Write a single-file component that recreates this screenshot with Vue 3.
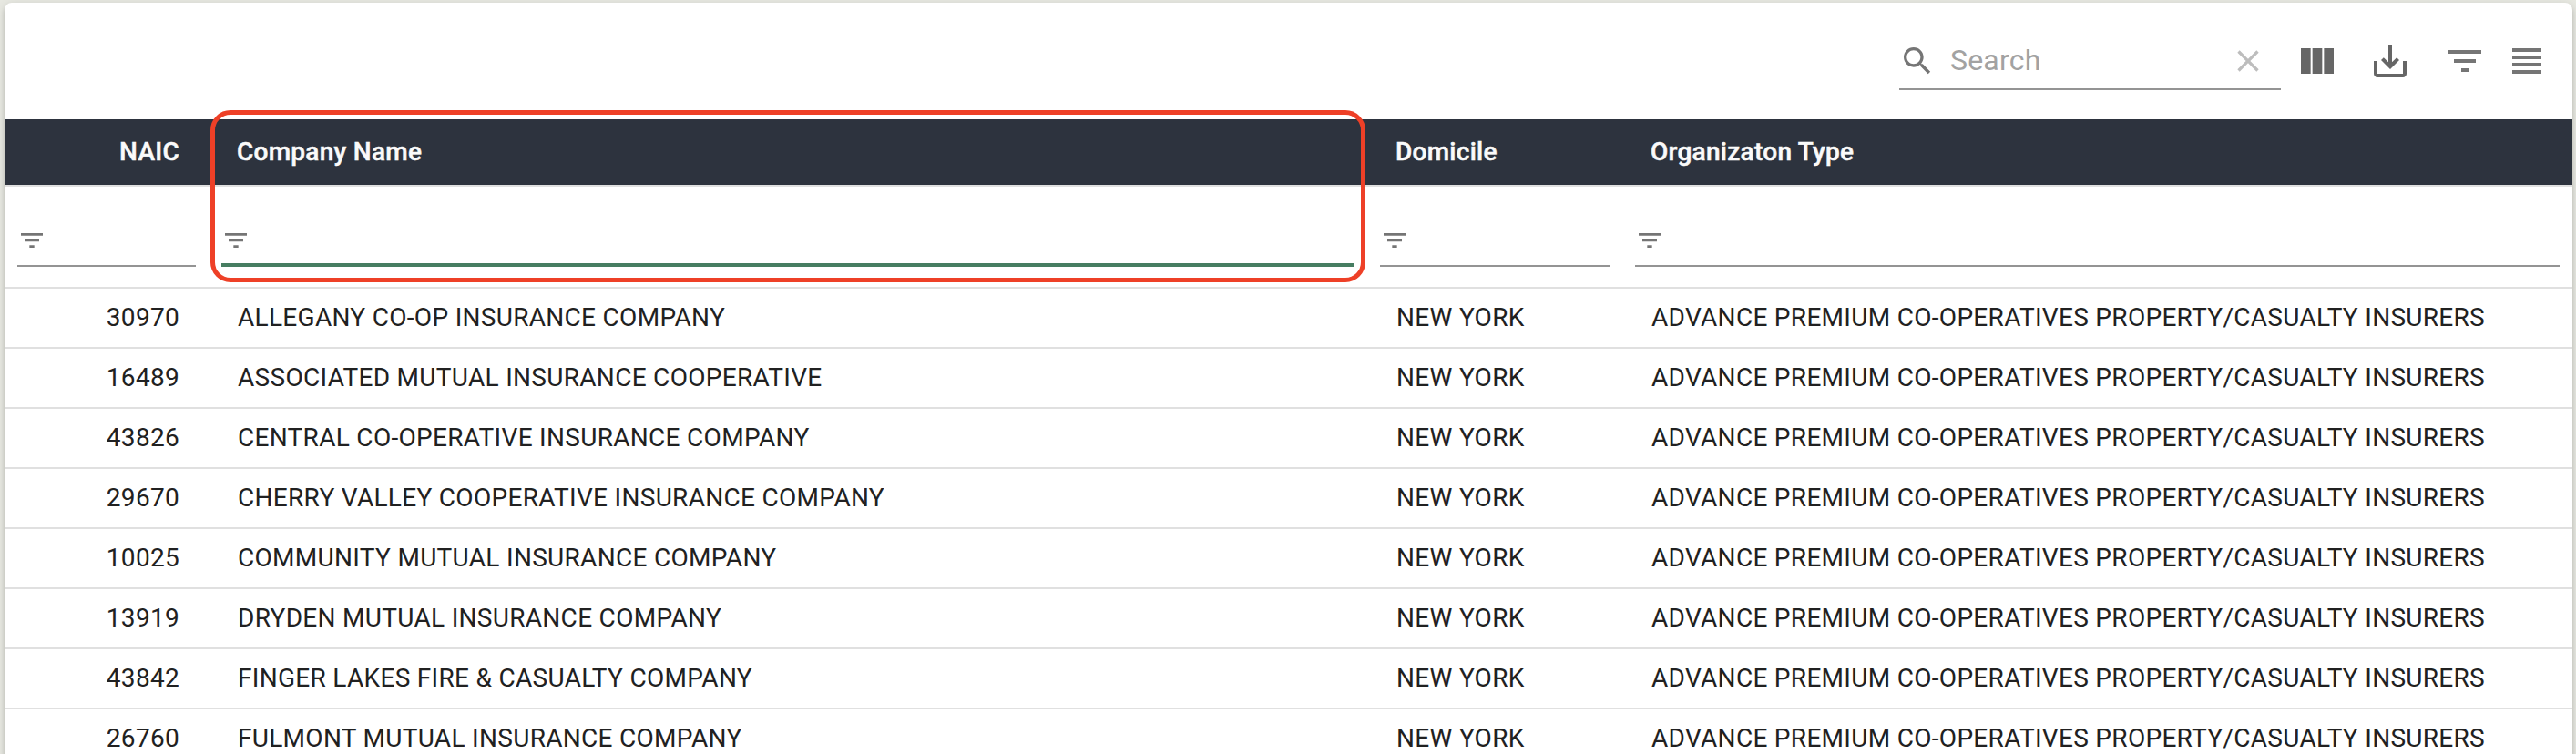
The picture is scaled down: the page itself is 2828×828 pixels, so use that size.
<script setup>
const icons = {
  search: 'M15.5 14h-.79l-.28-.27C15.41 12.59 16 11.11 16 9.5 16 5.91 13.09 3 9.5 3S3 5.91 3 9.5 5.91 16 9.5 16c1.61 0 3.09-.59 4.23-1.57l.27.28v.79l5 4.99L20.49 19l-4.99-5zm-6 0C7.01 14 5 11.99 5 9.5S7.01 5 9.5 5 14 7.01 14 9.5 11.99 14 9.5 14z',
  clear: 'M19 6.41L17.59 5 12 10.59 6.41 5 5 6.41 10.59 12 5 17.59 6.41 19 12 13.41 17.59 19 19 17.59 13.41 12z',
  columns: 'M14.67 5v14H9.33V5h5.34zm1 14H21V5h-5.33v14zm-7.34 0V5H3v14h5.33z',
  save: 'M19 12v7H5v-7H3v7c0 1.1.9 2 2 2h14c1.1 0 2-.9 2-2v-7h-2zm-6 .67l2.59-2.58L17 11.5l-5 5-5-5 1.41-1.41L11 12.67V3h2v9.67z',
  filter: 'M10 18h4v-2h-4v2zM3 6v2h18V6H3zm3 7h12v-2H6v2z',
  density: 'M4 15h16v-2H4v2zm0 4h16v-2H4v2zm0-8h16V9H4v2zm0-6v2h16V5H4z',
}
const columns = ['NAIC', 'Company Name', 'Domicile', 'Organizaton Type']
const companies = [
  ['30970', 'ALLEGANY CO-OP INSURANCE COMPANY'],
  ['16489', 'ASSOCIATED MUTUAL INSURANCE COOPERATIVE'],
  ['43826', 'CENTRAL CO-OPERATIVE INSURANCE COMPANY'],
  ['29670', 'CHERRY VALLEY COOPERATIVE INSURANCE COMPANY'],
  ['10025', 'COMMUNITY MUTUAL INSURANCE COMPANY'],
  ['13919', 'DRYDEN MUTUAL INSURANCE COMPANY'],
  ['43842', 'FINGER LAKES FIRE & CASUALTY COMPANY'],
  ['26760', 'FULMONT MUTUAL INSURANCE COMPANY'],
]
const rows = companies.map(([naic, name]) => [
  naic, name, 'NEW YORK', 'ADVANCE PREMIUM CO-OPERATIVES PROPERTY/CASUALTY INSURERS',
])
</script>

<template>
  <div class="page">
    <main class="card">
      <div class="toolbar">
        <div class="search">
          <svg class="icon-sm" viewBox="0 0 24 24"><path :d="icons.search" /></svg>
          <span class="placeholder">Search</span>
          <svg class="icon-sm clear" viewBox="0 0 24 24"><path :d="icons.clear" /></svg>
        </div>
        <svg class="icon columns" viewBox="0 0 24 24"><path :d="icons.columns" /></svg>
        <svg class="icon save" viewBox="0 0 24 24"><path :d="icons.save" /></svg>
        <svg class="icon filters" viewBox="0 0 24 24"><path :d="icons.filter" /></svg>
        <svg class="icon density" viewBox="0 0 24 24"><path :d="icons.density" /></svg>
      </div>

      <div class="grid header">
        <div v-for="c in columns" :key="c" class="head-cell">{{ c }}</div>
      </div>

      <div class="grid filter-row">
        <div v-for="(c, i) in columns" :key="c" class="filter-cell">
          <div class="field" :class="{ focused: i === 1 }">
            <svg class="icon-xs" viewBox="0 0 24 24"><path :d="icons.filter" /></svg>
          </div>
        </div>
      </div>

      <div v-for="row in rows" :key="row[0]" class="grid row">
        <div v-for="(cell, i) in row" :key="i" class="cell">{{ cell }}</div>
      </div>

      <div class="highlight"></div>
    </main>
  </div>
</template>

<style>
body {
  margin: 0;
}
</style>

<style scoped>
.page {
  box-sizing: border-box;
  width: 2828px;
  height: 828px;
  padding: 3px 4px 0 5px;
  overflow: hidden;
  background: #e7e8e1;
  font-family: Roboto, "Liberation Sans", sans-serif;
}
.card {
  position: relative;
  height: 900px;
  background: #fff;
  border-radius: 8px;
  box-shadow: 0 6px 2px -4px rgba(0, 0, 0, 0.2), 0 4px 4px rgba(0, 0, 0, 0.14), 0 2px 10px rgba(0, 0, 0, 0.12);
}
.toolbar {
  display: flex;
  align-items: center;
  justify-content: flex-end;
  height: 128px;
  padding-right: 26px;
  box-sizing: border-box;
}
.search {
  display: flex;
  align-items: center;
  box-sizing: border-box;
  width: 419px;
  height: 64px;
  padding: 2px 16px 0 0;
  border-bottom: 2px solid #949494;
}
svg {
  display: block;
  flex: none;
  fill: #757575;
}
.icon-sm {
  width: 40px;
  height: 40px;
}
.clear {
  margin-left: auto;
  fill: #bdbdbd;
}
.placeholder {
  margin: 0 0 2px 16px;
  font-size: 32px;
  line-height: 38px;
  letter-spacing: 0.2px;
  color: #a2a2a2;
}
.icon {
  width: 48px;
  height: 48px;
}
.columns {
  margin-left: 16px;
  fill: #666;
}
.save {
  margin-left: 32px;
  fill: #666;
}
.filters {
  margin-left: 34px;
}
.density {
  margin-left: 20px;
}
.grid {
  display: grid;
  grid-template-columns: 224px 1272px 280px 1fr;
  box-sizing: border-box;
}
.header {
  height: 74px;
  background: #2d333e;
  border-bottom: 2px solid #e0e0e0;
  color: #fafafa;
}
.head-cell {
  padding: 0 31px;
  font-size: 28px;
  font-weight: 500;
  line-height: 71px;
  letter-spacing: 0.27px;
  -webkit-text-stroke: 0.5px #fafafa;
  white-space: nowrap;
}
.head-cell:first-child,
.cell:first-child {
  padding-right: 32px;
  text-align: right;
}
.filter-row {
  height: 112px;
  border-bottom: 2px solid #e0e0e0;
}
.filter-cell {
  padding: 43px 14px 0;
}
.field {
  box-sizing: border-box;
  height: 45px;
  border-bottom: 2px solid #949494;
}
.field.focused {
  border-bottom: 4px solid #467d61;
}
.icon-xs {
  width: 32px;
  height: 32px;
}
.row {
  height: 66px;
  border-bottom: 2px solid #e0e0e0;
}
.cell {
  padding-left: 32px;
  font-size: 28px;
  line-height: 63px;
  letter-spacing: 0.3px;
  white-space: nowrap;
  color: #212121;
}
.highlight {
  position: absolute;
  top: 118px;
  left: 226px;
  box-sizing: border-box;
  width: 1268px;
  height: 189px;
  border: 5px solid #ee4027;
  border-radius: 22px;
}
</style>
